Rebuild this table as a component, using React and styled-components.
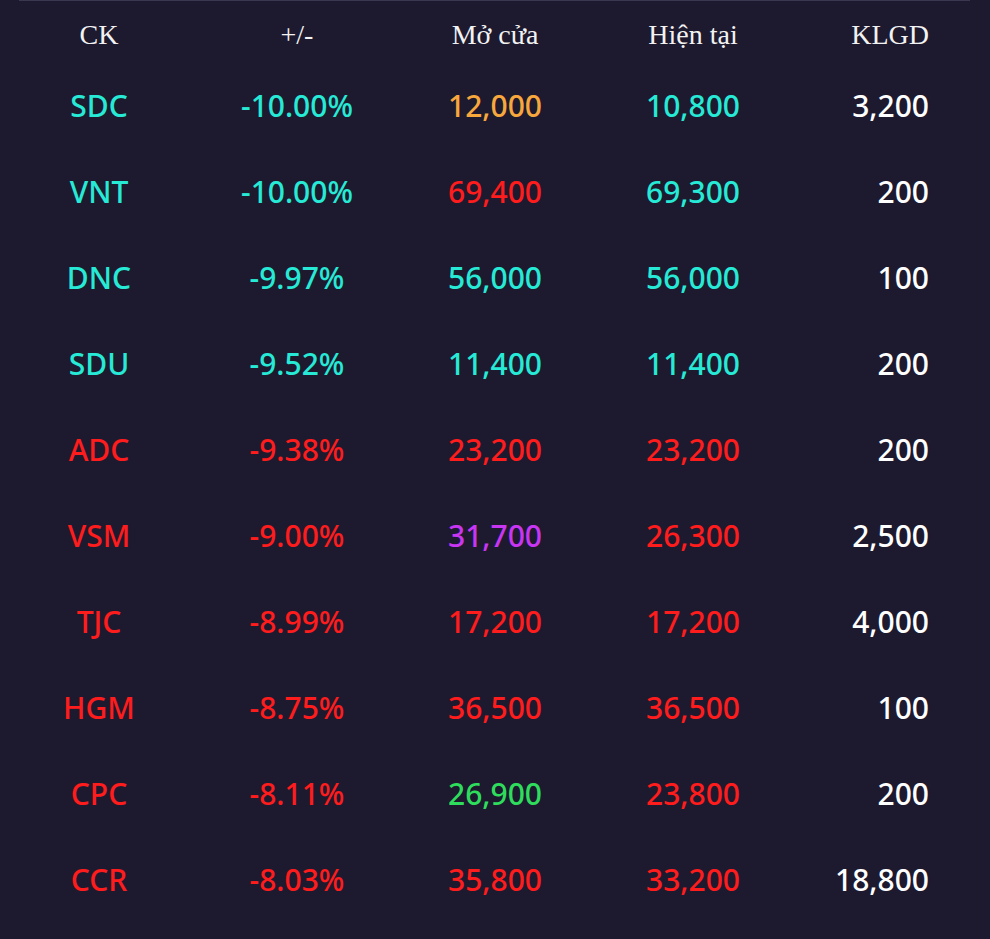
import React from "react";
import styled, { createGlobalStyle } from "styled-components";

const Global = createGlobalStyle`
  html, body {
    margin: 0;
    padding: 0;
    background: #1d1a2f;
  }
`;

const Page = styled.div`
  width: 990px;
  height: 939px;
  background: #1d1a2f;
  display: flex;
  flex-direction: column;
  overflow: hidden;
`;

const TopRule = styled.div`
  height: 1px;
  margin: 0 20px 0 19px;
  background: #3a3850;
`;

const Table = styled.div`
  display: grid;
  grid-template-columns: repeat(5, 198px);
`;

const HeadCell = styled.div`
  height: 61px;
  display: flex;
  align-items: center;
  justify-content: ${(p) => (p.$right ? "flex-end" : "center")};
  padding-right: ${(p) => (p.$right ? "61px" : "0")};
  padding-top: 6px;
  box-sizing: border-box;
  font-family: "Liberation Serif", "Times New Roman", serif;
  font-size: 28px;
  color: #f2f2f2;
`;

const Cell = styled.div`
  height: 86px;
  display: flex;
  align-items: center;
  justify-content: ${(p) => (p.$right ? "flex-end" : "center")};
  padding-right: ${(p) => (p.$right ? "61px" : "0")};
  font-family: "Noto Sans", "Open Sans", sans-serif;
  font-size: 30px;
  font-weight: 500;
  color: ${(p) => p.$color};
`;

const C = {
  cyan: "#26ead6",
  orange: "#f8a73d",
  red: "#ff1c1c",
  purple: "#c936f3",
  green: "#2fdd5c",
  white: "#ffffff",
};

const rows = [
  ["SDC", "-10.00%", "12,000", "10,800", "3,200", "cyan", "orange", "cyan"],
  ["VNT", "-10.00%", "69,400", "69,300", "200", "cyan", "red", "cyan"],
  ["DNC", "-9.97%", "56,000", "56,000", "100", "cyan", "cyan", "cyan"],
  ["SDU", "-9.52%", "11,400", "11,400", "200", "cyan", "cyan", "cyan"],
  ["ADC", "-9.38%", "23,200", "23,200", "200", "red", "red", "red"],
  ["VSM", "-9.00%", "31,700", "26,300", "2,500", "red", "purple", "red"],
  ["TJC", "-8.99%", "17,200", "17,200", "4,000", "red", "red", "red"],
  ["HGM", "-8.75%", "36,500", "36,500", "100", "red", "red", "red"],
  ["CPC", "-8.11%", "26,900", "23,800", "200", "red", "green", "red"],
  ["CCR", "-8.03%", "35,800", "33,200", "18,800", "red", "red", "red"],
];

export default function App() {
  return (
    <Page>
      <Global />
      <TopRule />
      <Table>
        <HeadCell>CK</HeadCell>
        <HeadCell>+/-</HeadCell>
        <HeadCell>Mở cửa</HeadCell>
        <HeadCell>Hiện tại</HeadCell>
        <HeadCell $right>KLGD</HeadCell>
        {rows.map(([ck, pct, open, cur, vol, main, openC, curC]) => (
          <React.Fragment key={ck}>
            <Cell $color={C[main]}>{ck}</Cell>
            <Cell $color={C[main]}>{pct}</Cell>
            <Cell $color={C[openC]}>{open}</Cell>
            <Cell $color={C[curC]}>{cur}</Cell>
            <Cell $right $color={C.white}>{vol}</Cell>
          </React.Fragment>
        ))}
      </Table>
    </Page>
  );
}
